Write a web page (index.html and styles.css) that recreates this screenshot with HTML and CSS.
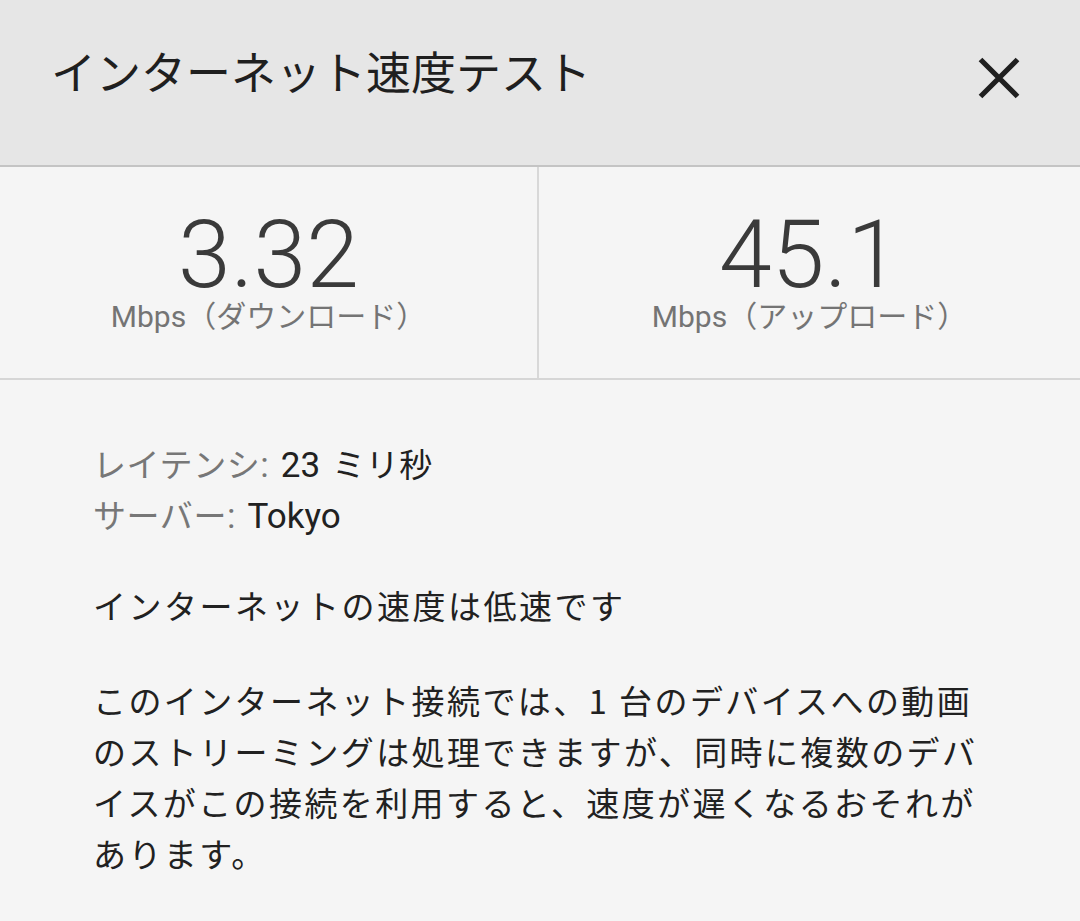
FILE: index.html
```html
<!DOCTYPE html>
<html lang="ja">
<head>
<meta charset="utf-8">
<title>インターネット速度テスト</title>
<link rel="stylesheet" href="styles.css">
</head>
<body>
<div class="page">
  <header class="header">
    <h1 class="title">インターネット速度テスト</h1>
    <button class="close" aria-label="閉じる">
      <svg width="42" height="42" viewBox="0 0 42 42">
        <path d="M2.5 2.5 L39.5 39.5 M39.5 2.5 L2.5 39.5" stroke="#202020" stroke-width="5.2" fill="none"/>
      </svg>
    </button>
  </header>
  <section class="stats">
    <div class="stat stat-left">
      <div class="num">3.32</div>
      <div class="unit">Mbps（ダウンロード）</div>
    </div>
    <div class="stat">
      <div class="num">45.1</div>
      <div class="unit">Mbps（アップロード）</div>
    </div>
  </section>
  <section class="details">
    <div class="meta"><span class="key">レイテンシ<span class="latin">:</span></span><span class="gap"></span><span class="latin">23</span><span class="gap"></span>ミリ秒</div>
    <div class="meta"><span class="key">サーバー<span class="latin">:</span></span><span class="gap"></span><span class="latin">Tokyo</span></div>
    <p class="status">インターネットの速度は低速です</p>
    <p class="desc">このインターネット接続では、1 台のデバイスへの動画のストリーミングは処理できますが、同時に複数のデバイスがこの接続を利用すると、速度が遅くなるおそれがあります。</p>
  </section>
</div>
</body>
</html>
```
FILE: styles.css
```css
html, body {
  margin: 0;
  padding: 0;
}
body {
  background: #f5f5f5;
  width: 1080px;
  height: 921px;
  overflow: hidden;
  font-family: "Noto Sans CJK JP", sans-serif;
  color: #212121;
}
.page {
  display: flex;
  flex-direction: column;
}
.header {
  height: 165px;
  background: #e6e6e6;
  border-bottom: 2px solid #c4c4c4;
  display: flex;
  justify-content: space-between;
  align-items: flex-start;
  padding: 0 60px 0 51px;
}
.title {
  margin: 48px 0 0 0;
  font-size: 45px;
  line-height: 45px;
  font-weight: 400;
  color: #1f1f1f;
}
.close {
  margin-top: 57px;
  padding: 0;
  border: 0;
  background: none;
  width: 42px;
  height: 42px;
  display: block;
}
.close svg {
  display: block;
}
.stats {
  display: grid;
  grid-template-columns: 539px 1fr;
  height: 211px;
  border-bottom: 2px solid #d6d6d6;
}
.stat {
  display: flex;
  flex-direction: column;
  align-items: center;
  padding-top: 43px;
}
.stat-left {
  border-right: 2px solid #d8d8d8;
}
.num {
  font-family: Roboto, sans-serif;
  font-weight: 300;
  font-size: 95px;
  line-height: 90px;
  color: #3a3a3a;
}
.unit {
  font-family: Roboto, "Noto Sans CJK JP", sans-serif;
  font-size: 30px;
  line-height: 30px;
  color: #747474;
  margin-top: 2px;
}
.details {
  padding: 58px 0 0 93px;
}
.meta {
  font-size: 33px;
  line-height: 51px;
  letter-spacing: 0.6px;
  color: #212121;
}
.key {
  color: #777777;
}
.latin {
  font-family: Roboto, sans-serif;
  font-size: 35px;
  line-height: 1;
  letter-spacing: 0;
}
.gap {
  display: inline-block;
  width: 12px;
}
.status {
  margin: 40px 0 0 0;
  font-size: 33px;
  line-height: 51px;
  letter-spacing: 2.5px;
}
.desc {
  margin: 44px 0 0 0;
  width: 900px;
  font-size: 33px;
  line-height: 51px;
  letter-spacing: 2.4px;
}
```
